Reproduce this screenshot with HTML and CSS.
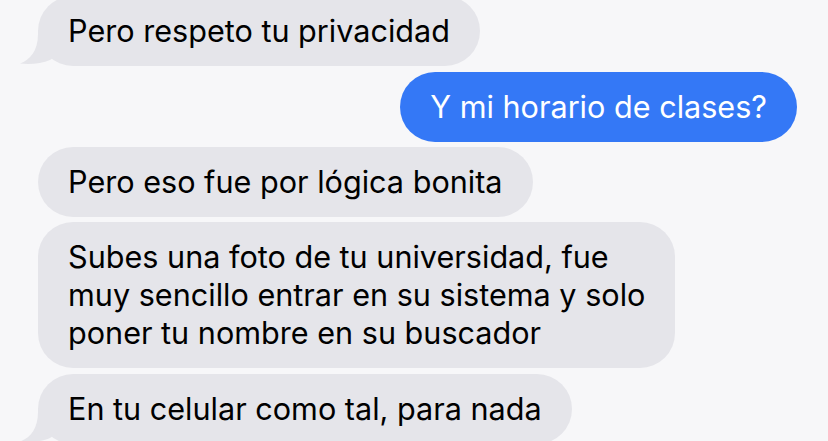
FILE: index.html
```html
<!DOCTYPE html>
<html lang="es">
<head>
<meta charset="utf-8">
<title>Mensajes</title>
<link rel="stylesheet" href="styles.css">
</head>
<body>
<div class="thread">
  <div class="bubble them tail b1">Pero respeto tu privacidad
    <svg class="tail-svg" viewBox="0 0 40 36" width="40" height="36"><path d="M20,0 L20,4 C20,21 12,30 2,33.5 C12,34.8 24,33.5 32,30 L40,25 L40,0 Z"/></svg>
  </div>
  <div class="bubble me b2">Y mi horario de clases?</div>
  <div class="bubble them b3">Pero eso fue por lógica bonita</div>
  <div class="bubble them b4">Subes una foto de tu universidad, fue<br>muy sencillo entrar en su sistema y solo<br>poner tu nombre en su buscador</div>
  <div class="bubble them tail b5">En tu celular como tal, para nada
    <svg class="tail-svg" viewBox="0 0 40 36" width="40" height="36"><path d="M20,0 L20,4 C20,21 12,30 2,33.5 C12,34.8 24,33.5 32,30 L40,25 L40,0 Z"/></svg>
  </div>
</div>
</body>
</html>
```
FILE: styles.css
```css
html, body {
  margin: 0;
  padding: 0;
  background: #f7f7f9;
  overflow: hidden;
}
body {
  width: 828px;
  height: 441px;
  font-family: "Inter", "Noto Sans", sans-serif;
}
.thread {
  display: flex;
  flex-direction: column;
  padding: 0 31px 0 38px;
  margin-top: -4px;
  gap: 5px;
}
.bubble {
  position: relative;
  font-size: 30.6px;
  line-height: 38px;
  padding: 16px 30px;
  border-radius: 35px;
  color: #000;
  white-space: nowrap;
}
.them {
  align-self: flex-start;
  background: #e5e5ea;
}
.me {
  align-self: flex-end;
  background: #3478f6;
  color: #fff;
}
.b2 { margin-top: 1px; }
.b4 { margin-top: 0; }
.b5 { margin-top: 1px; }
.tail-svg {
  position: absolute;
  left: -20px;
  bottom: 0;
  fill: #e5e5ea;
}
```
